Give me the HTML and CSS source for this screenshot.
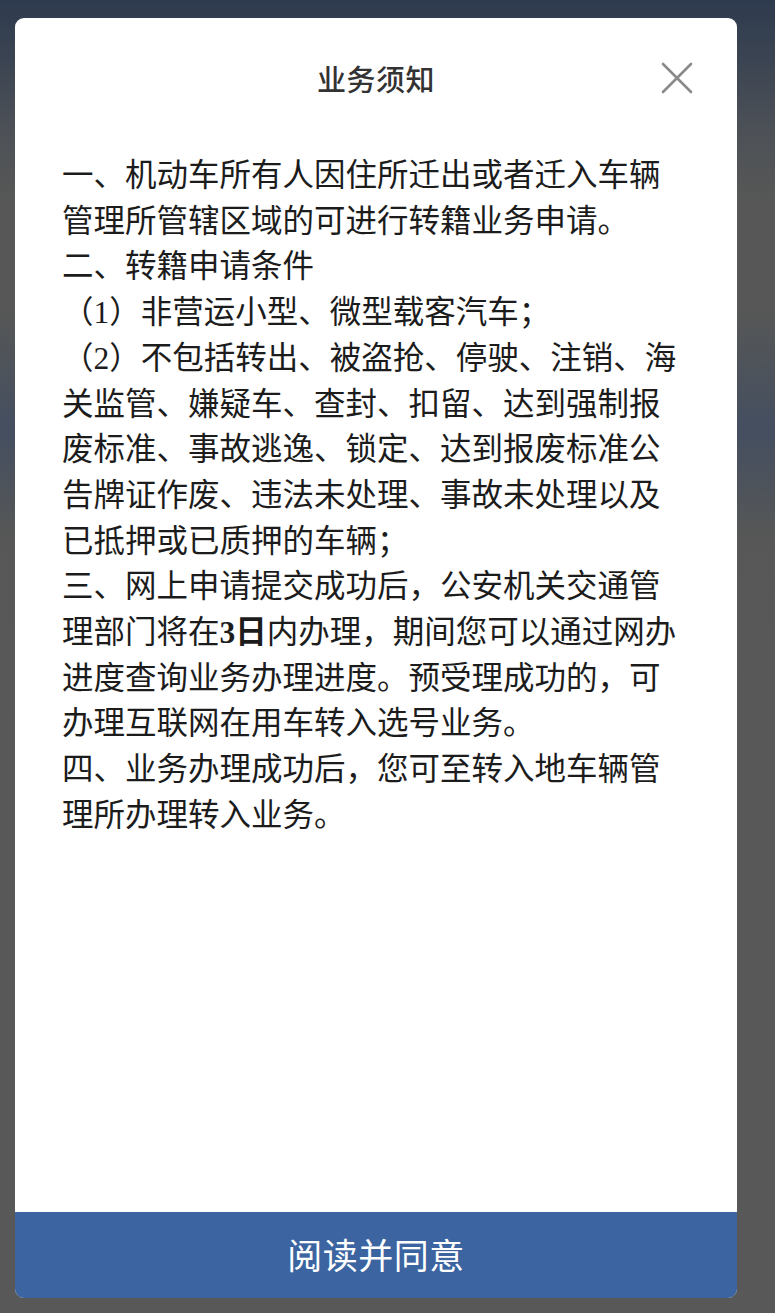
FILE: index.html
```html
<!DOCTYPE html>
<html lang="zh-CN">
<head>
<meta charset="utf-8">
<title>业务须知</title>
<link rel="stylesheet" href="styles.css">
</head>
<body>
<div class="modal">
  <div class="header">
    <div class="title">业务须知</div>
    <div class="close">
      <svg width="32" height="32" viewBox="0 0 32 32"><path d="M2 2 L30 30 M30 2 L2 30" stroke="#8a8a8a" stroke-width="2.6" stroke-linecap="round" fill="none"/></svg>
    </div>
  </div>
  <div class="content">
    <p>一、机动车所有人因住所迁出或者迁入车辆管理所管辖区域的可进行转籍业务申请。</p>
    <p>二、转籍申请条件</p>
    <p><span class="num">（1）</span>非营运小型、微型载客汽车；</p>
    <p><span class="num">（2）</span>不包括转出、被盗抢、停驶、注销、海关监管、嫌疑车、查封、扣留、达到强制报废标准、事故逃逸、锁定、达到报废标准公告牌证作废、违法未处理、事故未处理以及已抵押或已质押的车辆；</p>
    <p>三、网上申请提交成功后，公安机关交通管理部门将在<b class="num bold">3日</b>内办理，期间您可以通过网办进度查询业务办理进度。预受理成功的，可办理互联网在用车转入选号业务。</p>
    <p>四、业务办理成功后，您可至转入地车辆管理所办理转入业务。</p>
  </div>
  <div class="btn">阅读并同意</div>
</div>
</body>
</html>
```

FILE: styles.css
```css
html, body {
  margin: 0;
  padding: 0;
}
body {
  width: 775px;
  height: 1313px;
  overflow: hidden;
  font-family: "Noto Sans CJK SC", "Noto Sans", sans-serif;
  background:
    linear-gradient(180deg, rgba(60,80,115,0) 310px, rgba(55,72,105,0.55) 430px, rgba(60,80,115,0) 540px),
    linear-gradient(180deg, #2e3b4e 0px, #3b4452 60px, #4d5157 130px, #565756 200px, #575857 1313px);
  padding-top: 18px;
  box-sizing: border-box;
}
.modal {
  margin-left: 15px;
  width: 722px;
  height: 1280px;
  background: #fff;
  border-radius: 9px;
  overflow: hidden;
  display: flex;
  flex-direction: column;
}
.header {
  height: 120px;
  display: flex;
  align-items: center;
  justify-content: center;
  position: relative;
  flex: none;
}
.title {
  font-size: 29px;
  font-weight: 500;
  color: #333;
  letter-spacing: 0.5px;
}
.close {
  position: absolute;
  left: 646px;
  top: 44px;
  width: 32px;
  height: 32px;
}
.close svg {
  display: block;
}
.content {
  flex: 1;
  padding: 12px 0 0 47px;
  width: 622px;
  font-size: 31.5px;
  line-height: 45.7px;
  color: #1c1c1c;
}
.content p {
  margin: 0;
}
.num {
  font-family: "Liberation Serif", "Noto Sans CJK SC", serif;
  line-height: 1;
}
.bold {
  font-weight: 700;
}
.btn {
  flex: none;
  height: 86px;
  background: #3b64a0;
  color: #fff;
  font-size: 35px;
  display: flex;
  align-items: center;
  justify-content: center;
  letter-spacing: 0.5px;
  padding-bottom: 3px;
  box-sizing: border-box;
}
```
